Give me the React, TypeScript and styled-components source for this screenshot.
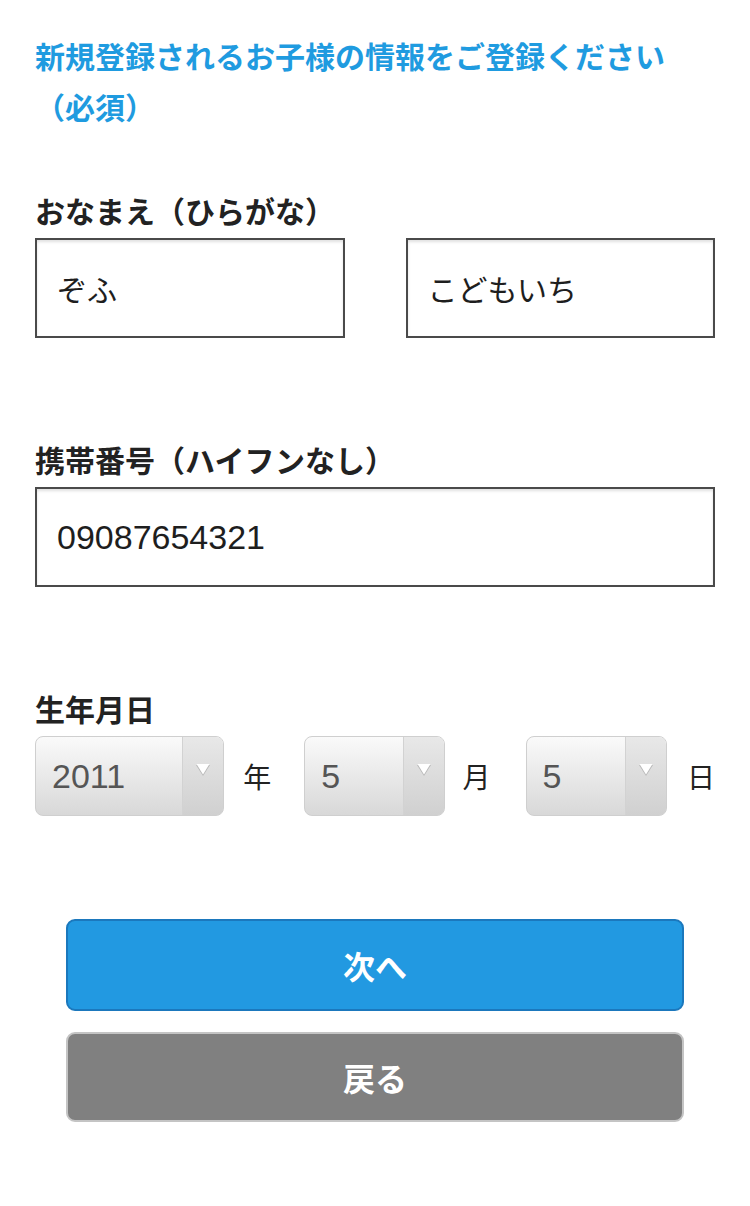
import React from 'react';
import styled, { createGlobalStyle } from 'styled-components';

const GlobalStyle = createGlobalStyle`
  html, body {
    margin: 0;
    padding: 0;
    background: #fff;
  }
  body {
    font-family: "Liberation Sans", "Noto Sans CJK JP", sans-serif;
    color: #222;
  }
`;

const Page = styled.div`
  width: 750px;
  box-sizing: border-box;
  padding: 30px 35px 60px;
`;

const Title = styled.h1`
  margin: 0;
  font-family: "Noto Sans CJK JP", sans-serif;
  font-size: 30px;
  line-height: 51px;
  font-weight: 700;
  color: #1f9be0;
`;

const Field = styled.div<{ $top: number }>`
  margin-top: ${(p) => p.$top}px;
`;

const Label = styled.div`
  font-family: "Noto Sans CJK JP", sans-serif;
  font-size: 30px;
  font-weight: 700;
  line-height: 40px;
  color: #222;
  margin-bottom: 8px;
`;

const NameRow = styled.div`
  display: grid;
  grid-template-columns: 1fr 1fr;
  gap: 61px;
`;

const TextBox = styled.div<{ $digits?: boolean }>`
  box-sizing: border-box;
  height: 100px;
  border: 2px solid #4a4a4a;
  box-shadow: inset 0 2px 3px rgba(0, 0, 0, 0.12);
  display: flex;
  align-items: center;
  padding-left: 20px;
  font-family: ${(p) => (p.$digits ? '"Liberation Sans", sans-serif' : '"Noto Sans CJK JP", sans-serif')};
  font-size: ${(p) => (p.$digits ? '34px' : '30px')};
  color: #1e1e1e;
`;

const DateRow = styled.div`
  display: flex;
  align-items: center;
`;

const SelectBox = styled.div<{ $w: number; $gap?: number }>`
  box-sizing: border-box;
  width: ${(p) => p.$w}px;
  height: 80px;
  margin-left: ${(p) => p.$gap ?? 0}px;
  border: 1px solid #cfcfcf;
  border-radius: 8px;
  background: linear-gradient(#fafafa, #d8d8d8);
  display: flex;
  overflow: hidden;
`;

const SelectValue = styled.div`
  flex: 1;
  display: flex;
  align-items: center;
  padding-left: 16px;
  font-family: "Liberation Sans", sans-serif;
  font-size: 34px;
  color: #555;
`;

const ArrowCell = styled.div`
  width: 41px;
  border-left: 1px solid #d2d2d2;
  background: linear-gradient(#e8e8e8, #d0d0d0);
  display: flex;
  justify-content: center;
  padding-top: 26px;
  box-sizing: border-box;
`;

const Unit = styled.span<{ $gap: number }>`
  margin-left: ${(p) => p.$gap}px;
  font-family: "Noto Sans CJK JP", sans-serif;
  font-size: 28px;
  color: #222;
`;

const Actions = styled.div`
  margin-top: 103px;
  padding: 0 31px 0 31px;
  display: flex;
  flex-direction: column;
  gap: 21px;
`;

const Button = styled.div<{ $primary?: boolean }>`
  box-sizing: border-box;
  height: ${(p) => (p.$primary ? 92 : 90)}px;
  border-radius: 9px;
  border: 2px solid ${(p) => (p.$primary ? '#1b78bd' : '#c4c4c4')};
  background: ${(p) => (p.$primary ? '#2299e1' : '#808080')};
  color: #fff;
  display: flex;
  align-items: center;
  justify-content: center;
  font-family: "Noto Sans CJK JP", sans-serif;
  font-size: 32px;
  font-weight: 700;
`;

function Arrow() {
  return (
    <svg width="16" height="14" viewBox="0 0 16 14">
      <polygon points="1,2 15,2 8,13" fill="#b8b8b8" />
      <polygon points="1.5,1 14.5,1 8,11.5" fill="#fff" />
    </svg>
  );
}

function Select({ value, width, gap }: { value: string; width: number; gap?: number }) {
  return (
    <SelectBox $w={width} $gap={gap}>
      <SelectValue>{value}</SelectValue>
      <ArrowCell>
        <Arrow />
      </ArrowCell>
    </SelectBox>
  );
}

export default function App() {
  return (
    <>
      <GlobalStyle />
      <Page>
        <Title>
          新規登録されるお子様の情報をご登録ください
          <br />
          （必須）
        </Title>

        <Field $top={58}>
          <Label>おなまえ（ひらがな）</Label>
          <NameRow>
            <TextBox>ぞふ</TextBox>
            <TextBox>こどもいち</TextBox>
          </NameRow>
        </Field>

        <Field $top={101}>
          <Label>携帯番号（ハイフンなし）</Label>
          <TextBox $digits>09087654321</TextBox>
        </Field>

        <Field $top={101}>
          <Label>生年月日</Label>
          <DateRow>
            <Select value="2011" width={190} />
            <Unit $gap={19}>年</Unit>
            <Select value="5" width={141} gap={33} />
            <Unit $gap={18}>月</Unit>
            <Select value="5" width={142} gap={35} />
            <Unit $gap={20}>日</Unit>
          </DateRow>
        </Field>

        <Actions>
          <Button $primary>次へ</Button>
          <Button>戻る</Button>
        </Actions>
      </Page>
    </>
  );
}
